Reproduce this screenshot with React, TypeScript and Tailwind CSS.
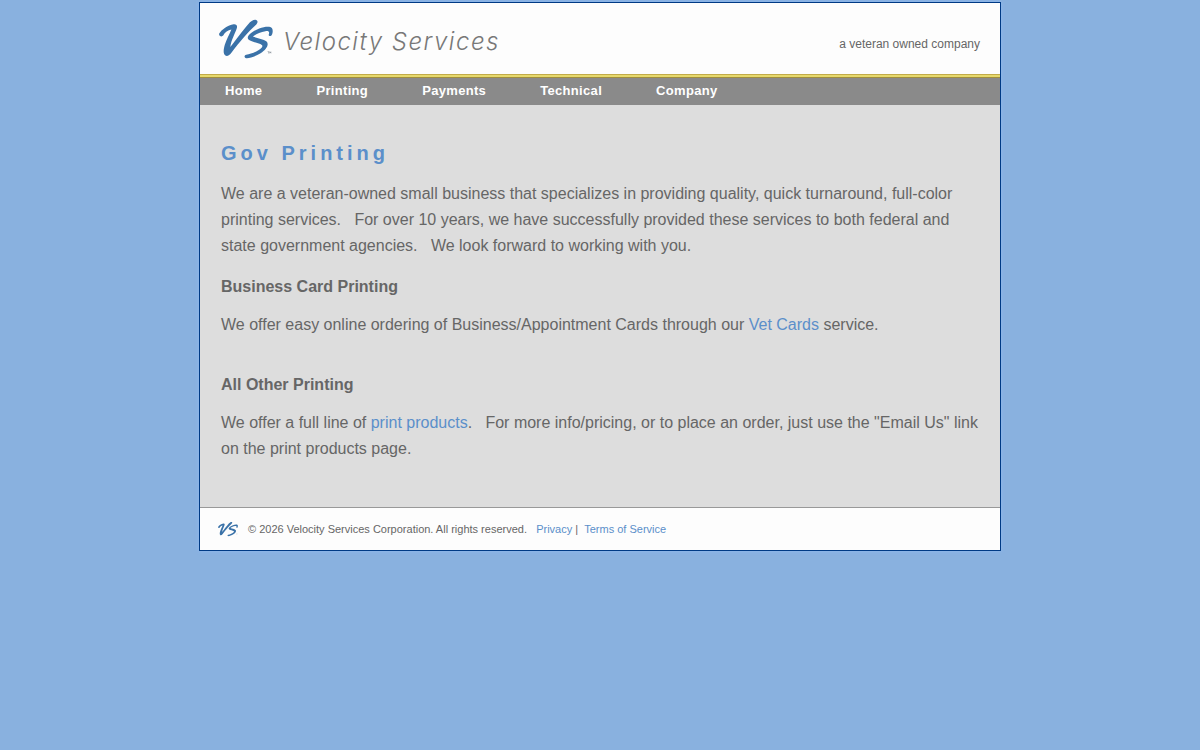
const navItems = ["Home", "Printing", "Payments", "Technical", "Company"];

function LogoMark({ className }: { className: string }) {
  return (
    <svg viewBox="0 0 54 40" className={className} aria-hidden="true" fill="#3a72a8">
      <path d="M0.2 14.6C2.4 10.6 9 6 14.6 5.2C17.6 4.9 18.6 6.6 17.8 9.2C16.2 14.2 12.2 21 11.3 28C17.2 20.8 23.6 11.4 29.2 5.2C31.8 2.2 34.6 0.4 37 0.9C39.2 1.5 39 3.8 36.8 6C30 12 20.6 22.8 12.6 33.4C10.6 36.2 8.4 37.6 6.4 36.6C4 35 4.4 30.6 5.8 25.8C7.4 20.4 10.4 15.4 12.4 10.4C9 11 5.8 13 4.2 16.6C3 18.2 -0.6 17.4 0.2 14.6Z" />
      <path d="M51.6 17C49.8 17.2 49.4 16.2 50 14.8C50.6 12.6 49.4 11.8 46.4 12.2C41.4 13 36.6 15.2 33.9 17.6C38 19.2 44.4 20 47.6 22.6C50.4 25.4 47.4 30.4 41.6 34.2C36.6 37.4 30.4 39.6 27.2 39.2C25 38.8 25 36.4 27.2 35.8C32.2 35 39.4 32 42.8 28.4C44.2 26.6 43 25.4 39.8 24.4C35.6 23 29.4 22 28.8 19.2C28.2 16 34.4 11.8 40.2 9.6C45.8 7.6 51 7 53 9.2C54.4 11.4 53.6 16.4 51.6 17Z" />
      <path d="M48.6 32.6h1.4v.5h-.5v1.3h-.5v-1.3h-.4zM50.4 32.6h.5l.4.8.4-.8h.5v1.8h-.4v-1l-.4.7h-.2l-.4-.7v1h-.4z" fill="#7d8790" />
    </svg>
  );
}

export default function App() {
  return (
    <div className="min-h-screen bg-[#89b1df] px-4 pt-[2px] font-['Liberation_Sans',Arial,sans-serif] text-[#666666]">
      <div className="mx-auto max-w-[802px] border border-[#003a85] bg-[#fdfdfd] shadow-[0_0_4px_#8fb8f0]">
        <header className="flex items-center justify-between px-5 pt-4 pb-[15px]">
          <a href="#home" className="-ml-px flex items-center gap-[10px]">
            <LogoMark className="h-10 w-[54px]" />
            <span className="pt-[6px] font-['Inter',sans-serif] text-2xl font-light tracking-[1.5px] text-[#787878] italic">
              Velocity Services
            </span>
          </a>
          <p className="pt-[10px] text-xs">a veteran owned company</p>
        </header>

        <nav className="border-t border-[#c2ab48] bg-[#8a8a8a]">
          <div className="h-[3px] border-b border-[#a18f3c] bg-[#e6d96d]" />
          <ul className="flex min-h-[27px] flex-wrap items-center gap-x-[54px] px-[25px] pb-px text-[13px] font-bold tracking-wide text-white">
            {navItems.map((item) => (
              <li key={item}>
                <a href={`#${item.toLowerCase()}`}>{item}</a>
              </li>
            ))}
          </ul>
        </nav>

        <main className="bg-[#dddddd] px-[21px] pt-8 pb-[45px] leading-[26px]">
          <h1 className="mb-3 text-xl leading-8 font-bold tracking-[4px] text-[#5b8fca]">Gov Printing</h1>
          <p>
            We are a veteran-owned small business that specializes in providing quality, quick turnaround, full-color
            printing services. &nbsp; For over 10 years, we have successfully provided these services to both federal
            and state government agencies. &nbsp; We look forward to working with you.
          </p>
          <h2 className="mt-[15px] mb-3 font-bold">Business Card Printing</h2>
          <p>
            We offer easy online ordering of Business/Appointment Cards through our{" "}
            <a href="#vet-cards" className="text-[#5b8fca]">Vet Cards</a> service.
          </p>
          <h2 className="mt-[34px] mb-3 font-bold">All Other Printing</h2>
          <p>
            We offer a full line of{" "}
            <a href="#print-products" className="text-[#5b8fca]">print products</a>. &nbsp; For more info/pricing, or to
            place an order, just use the "Email Us" link on the print products page.
          </p>
        </main>

        <footer className="flex items-center gap-[10px] border-t border-[#999999] px-[18px] py-[13px] text-[11px] leading-4">
          <LogoMark className="h-4 w-5" />
          <p>
            © 2026 Velocity Services Corporation. All rights reserved. &nbsp;&nbsp;
            <a href="#privacy" className="text-[#5b8fca]">Privacy</a> | &nbsp;
            <a href="#terms" className="text-[#5b8fca]">Terms of Service</a>
          </p>
        </footer>
      </div>
    </div>
  );
}
